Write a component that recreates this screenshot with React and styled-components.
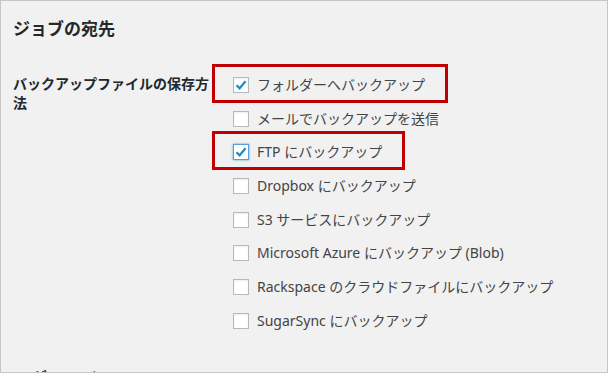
import React from 'react';
import styled, { createGlobalStyle } from 'styled-components';

const GlobalStyle = createGlobalStyle`
    body {
        margin: 0;
        background: #fff;
        font-family: "Noto Sans", "Noto Sans CJK JP", sans-serif;
    }
`;

const Frame = styled.div`
    width: 606px;
    height: 371px;
    border: 1px solid #c6c6c6;
    background-color: #f1f1f1;
    overflow: hidden;
    padding-left: 12px;
    box-sizing: content-box;
    display: flex;
    flex-direction: column;
    color: #23282d;
    width: 594px;
`;

const SectionTitle = styled.h3`
    margin: ${({top}) => top}px 0 0;
    font-family: "Noto Sans CJK JP", sans-serif;
    font-size: 17px;
    font-weight: 700;
    line-height: 24px;
    flex-shrink: 0;
`;

const FormRow = styled.div`
    display: flex;
    margin-top: 34px;
    flex-shrink: 0;
`;

const RowLabel = styled.div`
    width: 200px;
    padding-right: 10px;
    font-family: "Noto Sans CJK JP", sans-serif;
    font-size: 14px;
    font-weight: 700;
    line-height: 19px;
`;

const Options = styled.div`
    display: flex;
    flex-direction: column;
    align-items: flex-start;
    gap: 17.7px;
    padding: 3px 0 0 10px;
`;

const Option = styled.label`
    position: relative;
    display: inline-flex;
    align-items: center;
    gap: 8px;
    height: 16px;
    font-size: 14px;
    line-height: 16px;
    color: #444;
    white-space: nowrap;

    ${({marked}) => marked && `
        &::after {
            content: '';
            position: absolute;
            top: -13px;
            bottom: -10px;
            left: -21px;
            right: -23px;
            border: 3px solid #c00000;
        }
    `}
`;

const Box = styled.span`
    width: 16px;
    height: 16px;
    box-sizing: border-box;
    border: 1px solid ${({focused}) => (focused ? '#5b9dd9' : '#b4b9be')};
    background-color: #fff;
    box-shadow: ${({focused}) => (focused ? '0 0 2px rgba(30, 140, 190, 0.8)' : 'inset 0 1px 2px rgba(0, 0, 0, 0.07)')};
    display: flex;
    align-items: center;
    justify-content: center;
    flex-shrink: 0;
`;

const Check = () => (
    <svg width="12" height="12" viewBox="0 0 12 12">
        <path d="M1.5 6.2 L4.6 9.3 L10.6 2.2" fill="none" stroke="#1e8cbe" strokeWidth="2.2" strokeLinejoin="miter"/>
    </svg>
);

const destinations = [
    {text: 'フォルダーへバックアップ', checked: true, marked: true},
    {text: 'メールでバックアップを送信'},
    {text: 'FTP にバックアップ', checked: true, marked: true, focused: true},
    {text: 'Dropbox にバックアップ'},
    {text: 'S3 サービスにバックアップ'},
    {text: 'Microsoft Azure にバックアップ (Blob)'},
    {text: 'Rackspace のクラウドファイルにバックアップ'},
    {text: 'SugarSync にバックアップ'},
];

const App = () => {
    return (
        <>
            <GlobalStyle/>
            <Frame>
                <SectionTitle top={15}>ジョブの宛先</SectionTitle>
                <FormRow>
                    <RowLabel>バックアップファイルの保存方法</RowLabel>
                    <Options>
                        {destinations.map((d) => (
                            <Option key={d.text} marked={d.marked}>
                                <Box focused={d.focused}>{d.checked && <Check/>}</Box>
                                {d.text}
                            </Option>
                        ))}
                    </Options>
                </FormRow>
                <SectionTitle top={37}>ログファイル</SectionTitle>
            </Frame>
        </>
    );
};

export default App;
